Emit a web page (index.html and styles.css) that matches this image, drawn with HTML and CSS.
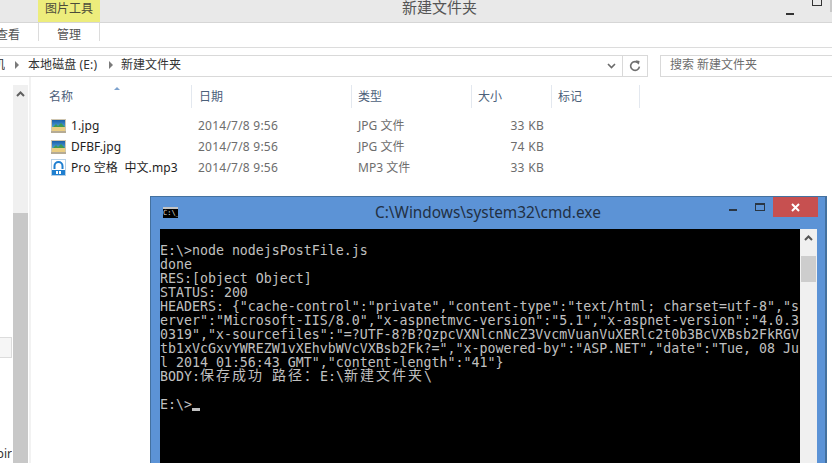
FILE: index.html
```html
<!DOCTYPE html>
<html lang="zh">
<head>
<meta charset="utf-8">
<title>新建文件夹</title>
<link rel="stylesheet" href="styles.css">
</head>
<body>
<svg class="defs" width="0" height="0" aria-hidden="true">
  <defs>
    <linearGradient id="sky" x1="0" y1="0" x2="0" y2="1"><stop offset="0" stop-color="#1a5fa8"/><stop offset="1" stop-color="#4f9ed8"/></linearGradient>
    <symbol id="pic" viewBox="0 0 15 14">
      <rect x="0" y="0" width="15" height="14" fill="#cfc6b0"/>
      <rect x="1" y="1" width="13" height="7" fill="url(#sky)"/>
      <path d="M2 8 L5 5 L7 7 L10 4 L14 8 Z" fill="#3f9a52"/>
      <rect x="1" y="8" width="13" height="4" fill="#e9cd82"/>
      <rect x="0" y="12" width="15" height="2" fill="#b5ab95"/>
    </symbol>
    <symbol id="mp3" viewBox="0 0 15 17">
      <rect x="0.5" y="0.5" width="14" height="16" fill="#fff" stroke="#b6d0e6"/>
      <path d="M3.5 10 V7 A4 4 0 0 1 11.5 7 V10" fill="none" stroke="#1f7fd0" stroke-width="2"/>
      <rect x="1" y="11" width="13" height="5" fill="#1f7fd0"/>
      <rect x="5" y="12" width="2" height="3" fill="#fff"/>
      <rect x="8" y="12" width="2" height="3" fill="#fff"/>
    </symbol>
  </defs>
</svg>

<div class="explorer">
  <header class="titlebar">
    <div class="tool-tab">图片工具</div>
    <div class="win-title">新建文件夹</div>
    <div class="win-controls">
      <span class="ctl-min"></span>
      <span class="ctl-max"></span>
      <span class="ctl-close"></span>
    </div>
  </header>

  <nav class="ribbon">
    <div class="ribbon-tab view">查看</div>
    <div class="ribbon-tab manage">管理</div>
  </nav>

  <div class="addressrow">
    <div class="address">
      <span class="crumb-clip">机</span>
      <span class="crumb-arrow"></span>
      <span class="crumb first">本地磁盘 (E:)</span>
      <span class="crumb-arrow"></span>
      <span class="crumb">新建文件夹</span>
      <span class="addr-spacer"></span>
      <svg class="chev" width="9" height="6" viewBox="0 0 9 6"><path d="M1 1 L4.5 4.5 L8 1" fill="none" stroke="#6a6a6a" stroke-width="1.6"/></svg>
      <span class="refresh">
        <svg width="12" height="12" viewBox="0 0 12 12"><path d="M9.6 3.4 A4.4 4.4 0 1 0 10.4 6.6" fill="none" stroke="#6f6f6f" stroke-width="1.6"/><path d="M6.8 0.2 L10.6 1 L9.8 4.8 Z" fill="#6f6f6f"/></svg>
      </span>
    </div>
    <div class="search">搜索 新建文件夹</div>
  </div>

  <main class="content">
    <aside class="sidebar">
      <div class="side-main">
        <div class="side-box"></div>
        <div class="side-text">pir</div>
      </div>
      <div class="side-scroll">
        <div class="side-track">
          <svg width="9" height="6" viewBox="0 0 9 6"><path d="M1 5 L4.5 1.5 L8 5" fill="none" stroke="#606060" stroke-width="2"/></svg>
        </div>
        <div class="side-thumb"></div>
      </div>
    </aside>

    <section class="files">
      <div class="row head">
        <div class="col name">名称<span class="sort"></span></div>
        <div class="col date">日期</div>
        <div class="col type">类型</div>
        <div class="col size">大小</div>
        <div class="col tag">标记</div>
      </div>
      <div class="row file first-file">
        <div class="col name"><svg class="ficon" width="15" height="14"><use href="#pic"/></svg>1.jpg</div>
        <div class="col date">2014/7/8 9:56</div>
        <div class="col type">JPG 文件</div>
        <div class="col size">33 KB</div>
      </div>
      <div class="row file">
        <div class="col name"><svg class="ficon" width="15" height="14"><use href="#pic"/></svg>DFBF.jpg</div>
        <div class="col date">2014/7/8 9:56</div>
        <div class="col type">JPG 文件</div>
        <div class="col size">74 KB</div>
      </div>
      <div class="row file">
        <div class="col name"><svg class="ficon" width="15" height="17"><use href="#mp3"/></svg>Pro 空格&nbsp;&nbsp;中文.mp3</div>
        <div class="col date">2014/7/8 9:56</div>
        <div class="col type">MP3 文件</div>
        <div class="col size">33 KB</div>
      </div>
    </section>
  </main>
</div>

<div class="cmd">
  <div class="cmd-title">
    <span class="cmd-icon">C:\_</span>
    <span class="cmd-name">C:\Windows\system32\cmd.exe</span>
    <span class="cmd-min"></span>
    <span class="cmd-max"></span>
    <span class="cmd-close">
      <svg width="9" height="9" viewBox="0 0 9 9"><path d="M1 1 L8 8 M8 1 L1 8" stroke="#fff" stroke-width="2"/></svg>
    </span>
  </div>
  <div class="cmd-body">
    <div class="console"><div>E:\&gt;node nodejsPostFile.js</div><div>done</div><div>RES:[object Object]</div><div>STATUS: 200</div><div>HEADERS: {"cache-control":"private","content-type":"text/html; charset=utf-8","s</div><div>erver":"Microsoft-IIS/8.0","x-aspnetmvc-version":"5.1","x-aspnet-version":"4.0.3</div><div>0319","x-sourcefiles":"=?UTF-8?B?QzpcVXNlcnNcZ3VvcmVuanVuXERlc2t0b3BcVXBsb2FkRGV</div><div>tb1xVcGxvYWREZW1vXEhvbWVcVXBsb2Fk?=","x-powered-by":"ASP.NET","date":"Tue, 08 Ju</div><div>l 2014 01:56:43 GMT","content-length":"41"}</div><div>BODY:<span class="wide">保存成功</span> <span class="wide">路径：</span>E:\<span class="wide">新建文件夹</span>\</div><div>&nbsp;</div><div>E:\&gt;<span class="cursor"></span></div></div>
    <div class="cmd-scroll">
      <svg width="9" height="6" viewBox="0 0 9 6"><path d="M1 5 L4.5 1.5 L8 5" fill="none" stroke="#555" stroke-width="2"/></svg>
      <div class="cmd-thumb"></div>
    </div>
  </div>
</div>
</body>
</html>
```

FILE: styles.css
```css
* { box-sizing: border-box; }
html, body {
  margin: 0;
  width: 832px;
  height: 463px;
  overflow: hidden;
  background: #fff;
}
body {
  position: relative;
  font-family: "Noto Sans", "Noto Sans CJK SC", sans-serif;
  font-size: 12px;
  color: #1e1e1e;
}
.defs { position: absolute; }

.explorer {
  display: flex;
  flex-direction: column;
  height: 463px;
}

/* title bar */
.titlebar {
  display: flex;
  flex: 0 0 22px;
  padding-left: 38px;
  background: #e9e9e9;
  border-bottom: 1px solid #d6d6d6;
  position: relative;
}
.tool-tab {
  width: 62px;
  height: 22px;
  background: #eded7c;
  color: #4c4c3a;
  text-align: center;
  line-height: 17px;
  font-size: 12px;
}
.win-title {
  margin-left: 302px;
  width: 76px;
  font-size: 15px;
  line-height: 14px;
  color: #555;
  white-space: nowrap;
}
.win-controls {
  display: flex;
  margin-left: auto;
  align-items: flex-start;
}
.ctl-min {
  width: 8px;
  height: 2px;
  margin-top: 13px;
  background: #333;
}
.ctl-max {
  width: 10px;
  height: 6px;
  margin-left: 18px;
  border: 1px solid #333;
  border-top: 0;
}
.ctl-close {
  width: 2px;
  height: 12px;
  margin-left: 8px;
  margin-right: 0;
  background: #c8c8c8;
}

/* ribbon */
.ribbon {
  display: flex;
  flex: 0 0 25px;
  padding-left: 0;
  border-bottom: 1px solid #dcdcdc;
  color: #555;
}
.ribbon-tab {
  height: 18px;
  line-height: 24px;
  font-size: 12px;
  text-align: center;
}
.ribbon-tab.view {
  width: 38px;
  padding-right: 18px;
  direction: rtl;
  overflow: hidden;
  white-space: nowrap;
}
.ribbon-tab.manage {
  width: 62px;
  border-left: 1px solid #dcdcdc;
  border-right: 1px solid #dcdcdc;
}

/* address */
.addressrow {
  display: flex;
  flex: 0 0 22px;
  height: 22px;
  margin-top: 7px;
}
.address {
  display: flex;
  align-items: center;
  width: 648px;
  height: 22px;
  border: 1px solid #d9d9d9;
  border-left: 0;
  line-height: 18px;
  padding-bottom: 2px;
}
.crumb-clip {
  width: 5px;
  overflow: hidden;
  direction: rtl;
  color: #333;
}
.crumb-arrow {
  width: 0;
  height: 0;
  margin-left: 10px;
  border-left: 4px solid #7a7a7a;
  border-top: 4px solid transparent;
  border-bottom: 4px solid transparent;
}
.crumb { margin-left: 8px; color: #333; white-space: nowrap; }
.crumb.first { margin-left: 9px; letter-spacing: 0.1px; }
.crumb.first + .crumb-arrow { margin-left: 12px; }
.addr-spacer { flex: 1; }
.chev { margin-right: 6px; margin-top: 2px; }
.refresh {
  display: flex;
  align-items: center;
  justify-content: center;
  align-self: flex-start;
  width: 25px;
  height: 20px;
  border-left: 1px solid #d9d9d9;
}
.search {
  margin-left: 12px;
  flex: 1;
  height: 22px;
  border: 1px solid #d9d9d9;
  border-right: 0;
  padding-left: 9px;
  line-height: 18px;
  color: #6d6d6d;
  white-space: nowrap;
}

/* content */
.content {
  display: flex;
  flex: 1;
  min-height: 0;
}
.sidebar {
  display: flex;
  flex: 0 0 31px;
  border-right: 2px solid #f2f2f2;
  padding-top: 8px;
}
.side-main {
  flex: 0 0 13px;
  position: relative;
}
.side-box {
  width: 12px;
  height: 21px;
  margin-top: 252px;
  border: 1px solid #dcdcdc;
  border-left: 0;
  background: #f6f6f6;
}
.side-text {
  margin-top: 88px;
  width: 12px;
  overflow: hidden;
  color: #333;
  line-height: 16px;
  direction: rtl;
}
.side-scroll {
  display: flex;
  flex-direction: column;
  flex: 0 0 15px;
}
.side-track {
  flex: 0 0 128px;
  background: #f0f0f0;
  text-align: center;
  padding-top: 6px;
  line-height: 0;
}
.side-thumb { flex: 1; background: #c8c8c8; }

.files { flex: 1; padding-top: 8px; }
.row {
  display: grid;
  grid-template-columns: 151px 160px 120px 80px 88px;
  margin-left: 10px;
  width: 599px;
}
.head {
  height: 22px;
  color: #4c607a;
  line-height: 23px;
}
.head .col {
  position: relative;
  border-right: 1px solid #e3e8ef;
  padding-left: 6px;
}
.head .col.name { padding-left: 8px; }
.head .col.date { padding-left: 7px; }
.sort {
  position: absolute;
  left: 73px;
  top: 2px;
  width: 0;
  height: 0;
  border-left: 3.5px solid transparent;
  border-right: 3.5px solid transparent;
  border-bottom: 3.5px solid #7da2ce;
}
.file {
  height: 21px;
  line-height: 21px;
  color: #6d6d6d;
}
.first-file { margin-top: 8px; }
.file .col { white-space: nowrap; }
.file .name {
  display: flex;
  align-items: center;
  padding-left: 10px;
  gap: 5px;
  color: #1e1e1e;
  letter-spacing: 0.1px;
}
.file .date { padding-left: 6px; letter-spacing: 0.23px; }
.file .type { padding-left: 6px; }
.file .size { text-align: right; padding-right: 8px; letter-spacing: 0.3px; }
.ficon { flex: 0 0 auto; }

/* cmd window: a window floating above the explorer */
.cmd {
  position: absolute;
  left: 150px;
  top: 196px;
  width: 677px;
  height: 267px;
  background: #5c93d6;
  border: 1px solid #44719f;
  border-right-width: 2px;
  border-bottom: 0;
  display: flex;
  flex-direction: column;
}
.cmd-title {
  flex: 0 0 32px;
  display: flex;
  align-items: flex-start;
  position: relative;
}
.cmd-icon {
  margin: 10px 0 0 12px;
  width: 15px;
  height: 11px;
  background: #000;
  border-top: 2px solid #c4c4c4;
  color: #ddd;
  font: 7px/9px "DejaVu Sans Mono", monospace;
  overflow: hidden;
  white-space: nowrap;
}
.cmd-name {
  margin: 6px 0 0 197px;
  width: 241px;
  font-size: 15.4px;
  line-height: 20px;
  color: #223044;
  white-space: nowrap;
}
.cmd-min {
  width: 8px;
  height: 2px;
  margin: 12px 0 0 113px;
  background: #2a3644;
}
.cmd-max {
  width: 10px;
  height: 8px;
  margin: 6px 0 0 18px;
  border: 1px solid #2a3644;
  border-top-width: 2px;
}
.cmd-close {
  width: 45px;
  height: 20px;
  margin-left: 8px;
  background: #c75050;
  display: flex;
  align-items: center;
  justify-content: center;
}
.cmd-body {
  flex: 1;
  display: flex;
  margin: 0 8px 0 9px;
  min-height: 0;
}
.console {
  width: 640px;
  background: #000;
  color: #c0c0c0;
  padding-top: 15px;
  font-family: "DejaVu Sans Mono", "Noto Sans CJK SC", monospace;
  font-size: 13.28px;
  line-height: 14px;
  white-space: pre;
  overflow: hidden;
}
.console div { height: 14px; }
.wide {
  font-family: "Noto Sans CJK SC", sans-serif;
  font-size: 14px;
  letter-spacing: 2px;
  line-height: 0;
  vertical-align: 1px;
}
.cursor {
  display: inline-block;
  width: 8px;
  height: 3px;
  background: #c0c0c0;
  vertical-align: -2px;
}
.cmd-scroll {
  flex: 0 0 17px;
  background: #f0f0f0;
  display: flex;
  flex-direction: column;
  align-items: center;
  padding-top: 6px;
  line-height: 0;
}
.cmd-thumb {
  width: 15px;
  height: 26px;
  margin-top: 15px;
  background: #cdcdcd;
}
```
